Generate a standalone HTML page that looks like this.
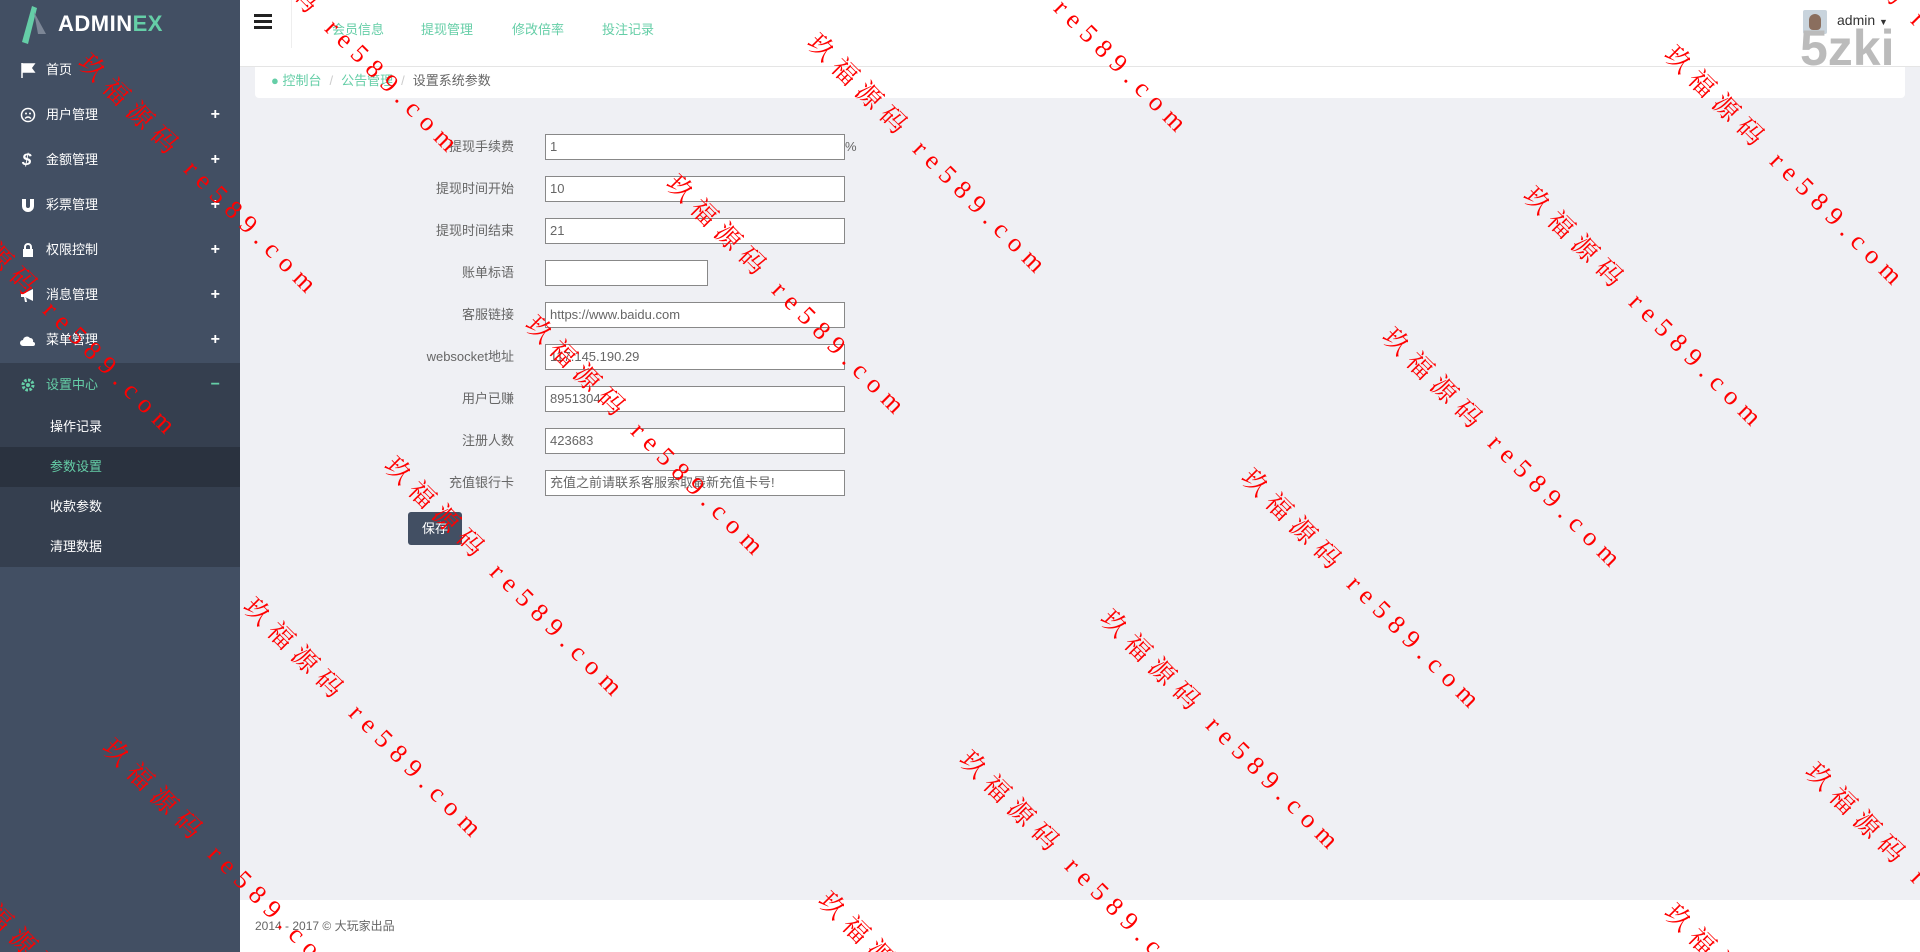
<!DOCTYPE html>
<html style="overflow:hidden;width:1920px;height:952px"><head><meta charset="utf-8">
<style>
*{box-sizing:border-box;margin:0;padding:0}
html,body{width:1920px;height:952px;overflow:hidden}
body{background:#eff0f4;font-family:"Liberation Sans","Noto Sans CJK SC",sans-serif;font-size:13px;color:#666}
#wrap{position:relative;width:1920px;height:952px;overflow:hidden}
.side{position:absolute;left:0;top:0;width:240px;height:952px;background:#424f63}
.logo{position:absolute;left:20px;top:4px;height:40px;display:flex;align-items:center}
.logo span{color:#fff;font-weight:bold;font-size:22px;margin-left:8px;letter-spacing:0.5px}
.logo span b{color:#65cea7}
.mi{position:absolute;left:0;width:240px;height:45px;color:#fff;font-size:13px;line-height:45px;padding-left:46px}
.mi i{position:absolute;left:20px;top:15px;width:16px;height:16px;display:block;line-height:16px}
.mi i svg{display:block}
.mi .p{position:absolute;right:20px;top:0;font-size:16px;font-weight:bold}
.sub{position:absolute;left:0;top:363px;width:240px;height:204px;background:#353f4f}
.si{position:absolute;left:0;width:240px;height:40px;line-height:40px;padding-left:50px;color:#fff;font-size:13px}
.top{position:absolute;left:240px;top:0;width:1680px;height:67px;background:#fff;border-bottom:1px solid #e5e5e5}
.top a{position:absolute;top:19px;color:#65cea7;font-size:13px}
.bc{position:absolute;left:255px;top:67px;width:1650px;height:31px;background:#fff;border-radius:0 0 4px 4px;line-height:28px;padding-left:16px;font-size:13px}
.bc .g{color:#65cea7}
.bc .s{color:#ccc;margin:0 8px}
.lab{position:absolute;width:200px;left:314px;text-align:right;font-size:13px;color:#666;line-height:16px}
.inp{position:absolute;left:545px;width:300px;height:26px;border:1px solid #888;background:#fff;padding-left:4px;line-height:24px;font-size:13px;color:#666}
.btn{position:absolute;left:408px;top:512px;width:54px;height:33px;background:#424f63;border-radius:3px;color:#fff;line-height:33px;text-align:center;font-size:13px}
.foot{position:absolute;left:240px;top:900px;width:1680px;height:52px;background:#fff;line-height:52px;padding-left:15px;font-size:12px;color:#666}
.wm{position:absolute;transform:rotate(45deg);transform-origin:0 0;color:#f00;font-family:"Liberation Serif","Noto Serif CJK SC",serif;font-size:26px;white-space:nowrap}
.wm .c{letter-spacing:8px}
.wm .l{letter-spacing:8px;margin-left:14px}
</style></head><body><div id="wrap">
<div class="side">
 <div class="logo"><svg width="30" height="40" viewBox="0 0 30 40"><path d="M2 38 L12 2 L17 4 L8 40 Z" fill="#65cea7"/><path d="M14 8 L26 30 L18 30 Z" fill="#7c8696"/></svg><span>ADMIN<b>EX</b></span></div>
 <div class="mi" style="top:47px"><i><svg width="16" height="16"><path d="M2 1v15M3 2h11l-3 4 3 4H3z" stroke="#fff" fill="#fff" stroke-width="1.5"/></svg></i>首页</div>
 <div class="mi" style="top:92px"><i><svg width="16" height="16"><circle cx="8" cy="8" r="6.5" stroke="#fff" fill="none" stroke-width="1.5"/><circle cx="6" cy="6.5" r="1" fill="#fff"/><circle cx="10" cy="6.5" r="1" fill="#fff"/><path d="M5 11.5q3-3 6 0" stroke="#fff" fill="none" stroke-width="1.3"/></svg></i>用户管理<span class="p">+</span></div>
 <div class="mi" style="top:137px"><i style="font-size:17px;font-weight:bold;left:22px">$</i>金额管理<span class="p">+</span></div>
 <div class="mi" style="top:182px"><i><svg width="16" height="16"><path d="M2 2h4v7a2 2 0 004 0V2h4v7a6 6 0 01-12 0z" fill="#fff"/></svg></i>彩票管理<span class="p">+</span></div>
 <div class="mi" style="top:227px"><i><svg width="16" height="16"><rect x="3" y="7" width="10" height="8" fill="#fff"/><path d="M5 7V5a3 3 0 016 0v2" stroke="#fff" fill="none" stroke-width="2"/></svg></i>权限控制<span class="p">+</span></div>
 <div class="mi" style="top:272px"><i><svg width="16" height="16"><path d="M1 6h4l8-4v12l-8-4H1z M4 10l1 5h2l-1-5" fill="#fff"/></svg></i>消息管理<span class="p">+</span></div>
 <div class="mi" style="top:317px"><i><svg width="16" height="16"><path d="M3 14a3 3 0 010-6 4 4 0 017-2 3 3 0 013 4 2 2 0 010 4z" fill="#fff"/></svg></i>菜单管理<span class="p">+</span></div>
 <div class="sub"></div>
 <div class="mi" style="top:362px;color:#65cea7"><i><svg width="16" height="16"><circle cx="8" cy="8" r="5" fill="none" stroke="#65cea7" stroke-width="3" stroke-dasharray="2.5 1.4"/><circle cx="8" cy="8" r="2" fill="#65cea7"/></svg></i>设置中心<span class="p">−</span></div>
 <div class="si" style="top:407px">操作记录</div>
 <div class="si" style="top:447px;background:#2a323f;color:#65cea7">参数设置</div>
 <div class="si" style="top:487px">收款参数</div>
 <div class="si" style="top:527px">清理数据</div>
</div>
<div class="top">
 <div style="position:absolute;left:14px;top:14px;width:18px"><div style="height:3px;background:#222;margin-bottom:3px"></div><div style="height:3px;background:#222;margin-bottom:3px"></div><div style="height:3px;background:#222"></div></div>
 <div style="position:absolute;left:51px;top:0;width:1px;height:48px;background:#eee"></div>
 <a style="left:92px">会员信息</a><a style="left:181px">提现管理</a><a style="left:272px">修改倍率</a><a style="left:362px">投注记录</a>
 <div style="position:absolute;left:1563px;top:10px;width:24px;height:24px;background:#c9d4dd;border-radius:2px"><div style="margin:4px auto 0;width:12px;height:16px;background:#8a6e5e;border-radius:6px 6px 4px 4px"></div></div>
 <div style="position:absolute;left:1597px;top:12px;font-size:14px;color:#333">admin <span style="font-size:9px">▼</span></div>
 <div style="position:absolute;left:1560px;top:22px;font-size:50px;line-height:52px;color:#bbb;font-family:'Liberation Sans',sans-serif;font-weight:bold">5zki</div>
</div>
<div class="bc"><span class="g">● 控制台</span><span class="s">/</span><span class="g">公告管理</span><span class="s">/</span>设置系统参数</div>

<div class="lab" style="top:139px">提现手续费</div><div class="inp" style="top:134px">1</div><div style="position:absolute;left:845px;top:139px">%</div>
<div class="lab" style="top:181px">提现时间开始</div><div class="inp" style="top:176px">10</div>
<div class="lab" style="top:223px">提现时间结束</div><div class="inp" style="top:218px">21</div>
<div class="lab" style="top:265px">账单标语</div><div class="inp" style="top:260px;width:163px"></div>
<div class="lab" style="top:307px">客服链接</div><div class="inp" style="top:302px">https://www.baidu.com</div>
<div class="lab" style="top:349px">websocket地址</div><div class="inp" style="top:344px">117.145.190.29</div>
<div class="lab" style="top:391px">用户已赚</div><div class="inp" style="top:386px">8951304</div>
<div class="lab" style="top:433px">注册人数</div><div class="inp" style="top:428px">423683</div>
<div class="lab" style="top:475px">充值银行卡</div><div class="inp" style="top:470px">充值之前请联系客服索取最新充值卡号!</div>
<div class="btn">保存</div>
<div class="foot">2014 - 2017 © 大玩家出品</div>

<div class="wm" style="left:826px;top:24px"><span class="c">玖福源码</span><span class="l">re589.com</span></div>
<div class="wm" style="left:685px;top:165px"><span class="c">玖福源码</span><span class="l">re589.com</span></div>
<div class="wm" style="left:544px;top:306px"><span class="c">玖福源码</span><span class="l">re589.com</span></div>
<div class="wm" style="left:403px;top:447px"><span class="c">玖福源码</span><span class="l">re589.com</span></div>
<div class="wm" style="left:262px;top:588px"><span class="c">玖福源码</span><span class="l">re589.com</span></div>
<div class="wm" style="left:121px;top:729px"><span class="c">玖福源码</span><span class="l">re589.com</span></div>
<div class="wm" style="left:-20px;top:870px"><span class="c">玖福源码</span><span class="l">re589.com</span></div>
<div class="wm" style="left:967px;top:-117px"><span class="c">玖福源码</span><span class="l">re589.com</span></div>
<div class="wm" style="left:238px;top:-97px"><span class="c">玖福源码</span><span class="l">re589.com</span></div>
<div class="wm" style="left:97px;top:44px"><span class="c">玖福源码</span><span class="l">re589.com</span></div>
<div class="wm" style="left:-44px;top:185px"><span class="c">玖福源码</span><span class="l">re589.com</span></div>
<div class="wm" style="left:1683px;top:36px"><span class="c">玖福源码</span><span class="l">re589.com</span></div>
<div class="wm" style="left:1542px;top:177px"><span class="c">玖福源码</span><span class="l">re589.com</span></div>
<div class="wm" style="left:1401px;top:318px"><span class="c">玖福源码</span><span class="l">re589.com</span></div>
<div class="wm" style="left:1260px;top:459px"><span class="c">玖福源码</span><span class="l">re589.com</span></div>
<div class="wm" style="left:1119px;top:600px"><span class="c">玖福源码</span><span class="l">re589.com</span></div>
<div class="wm" style="left:978px;top:741px"><span class="c">玖福源码</span><span class="l">re589.com</span></div>
<div class="wm" style="left:837px;top:882px"><span class="c">玖福源码</span><span class="l">re589.com</span></div>
<div class="wm" style="left:1824px;top:-105px"><span class="c">玖福源码</span><span class="l">re589.com</span></div>
<div class="wm" style="left:1824px;top:753px"><span class="c">玖福源码</span><span class="l">re589.com</span></div>
<div class="wm" style="left:1683px;top:894px"><span class="c">玖福源码</span><span class="l">re589.com</span></div>
</div></body></html>
